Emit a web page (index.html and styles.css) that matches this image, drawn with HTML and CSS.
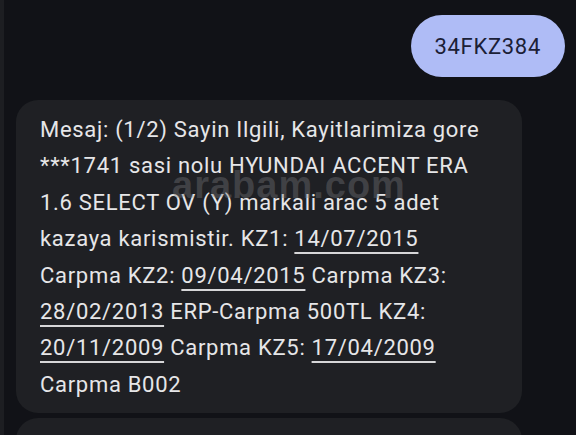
FILE: index.html
```html
<!DOCTYPE html>
<html lang="tr">
<head>
    <meta charset="UTF-8">
    <meta name="viewport" content="width=device-width, initial-scale=1.0">
    <title>Mesajlar</title>
    <link rel="stylesheet" href="styles.css">
</head>
<body>
    <div class="screen">
        <div class="thread">
            <div class="msg out">
                <div class="bubble">34FKZ384</div>
            </div>

            <div class="msg in">
                <div class="bubble">
                    Mesaj: (1/2) Sayin Ilgili, Kayitlarimiza gore<br>
                    ***1741 sasi nolu HYUNDAI ACCENT ERA<br>
                    1.6 SELECT OV (Y) markali arac 5 adet<br>
                    kazaya karismistir. KZ1: <span class="date">14/07/2015</span><br>
                    Carpma KZ2: <span class="date">09/04/2015</span> Carpma KZ3:<br>
                    <span class="date">28/02/2013</span> ERP-Carpma 500TL KZ4:<br>
                    <span class="date">20/11/2009</span> Carpma KZ5: <span class="date">17/04/2009</span><br>
                    Carpma B002
                </div>
            </div>

            <div class="msg in">
                <div class="bubble next"></div>
            </div>
        </div>

        <div class="watermark">arabam.com</div>
    </div>
</body>
</html>
```

FILE: styles.css
```css
* {
    margin: 0;
    padding: 0;
    box-sizing: border-box;
}

body {
    font-family: Roboto, "Noto Sans", sans-serif;
    background: #111217;
    overflow: hidden;
}

.screen {
    position: relative;
    height: 435px;
    border-left: 4px solid #1d1e22;
    border-right: 4px solid #ffffff;
    overflow: hidden;
}

.thread {
    display: flex;
    flex-direction: column;
    padding: 15px 11px 0 12px;
}

.msg {
    display: flex;
}

.msg.out {
    justify-content: flex-end;
    margin-bottom: 23px;
}

.msg.in {
    margin-bottom: 5px;
}

.bubble {
    font-size: 22px;
    letter-spacing: 0.7px;
    white-space: nowrap;
}

.out .bubble {
    background: #afbcf6;
    color: #1b2036;
    height: 62px;
    padding: 0 24px 0 23px;
    border-radius: 31px;
    display: flex;
    align-items: center;
}

.in .bubble {
    width: 506px;
    background: #1f2024;
    color: #e6e6e8;
    line-height: 36.4px;
    padding: 12px 24px 10px;
    border-radius: 22px;
}

.in .bubble.next {
    height: 60px;
}

.date {
    text-decoration: underline;
    text-decoration-thickness: 2px;
    text-underline-offset: 6px;
    text-decoration-color: #d6d6d8;
}

.watermark {
    position: absolute;
    left: 168px;
    top: 164px;
    font-family: "Liberation Sans", Arial, sans-serif;
    font-weight: bold;
    font-size: 38px;
    letter-spacing: 1px;
    color: rgba(120, 120, 124, 0.38);
    pointer-events: none;
}
```
